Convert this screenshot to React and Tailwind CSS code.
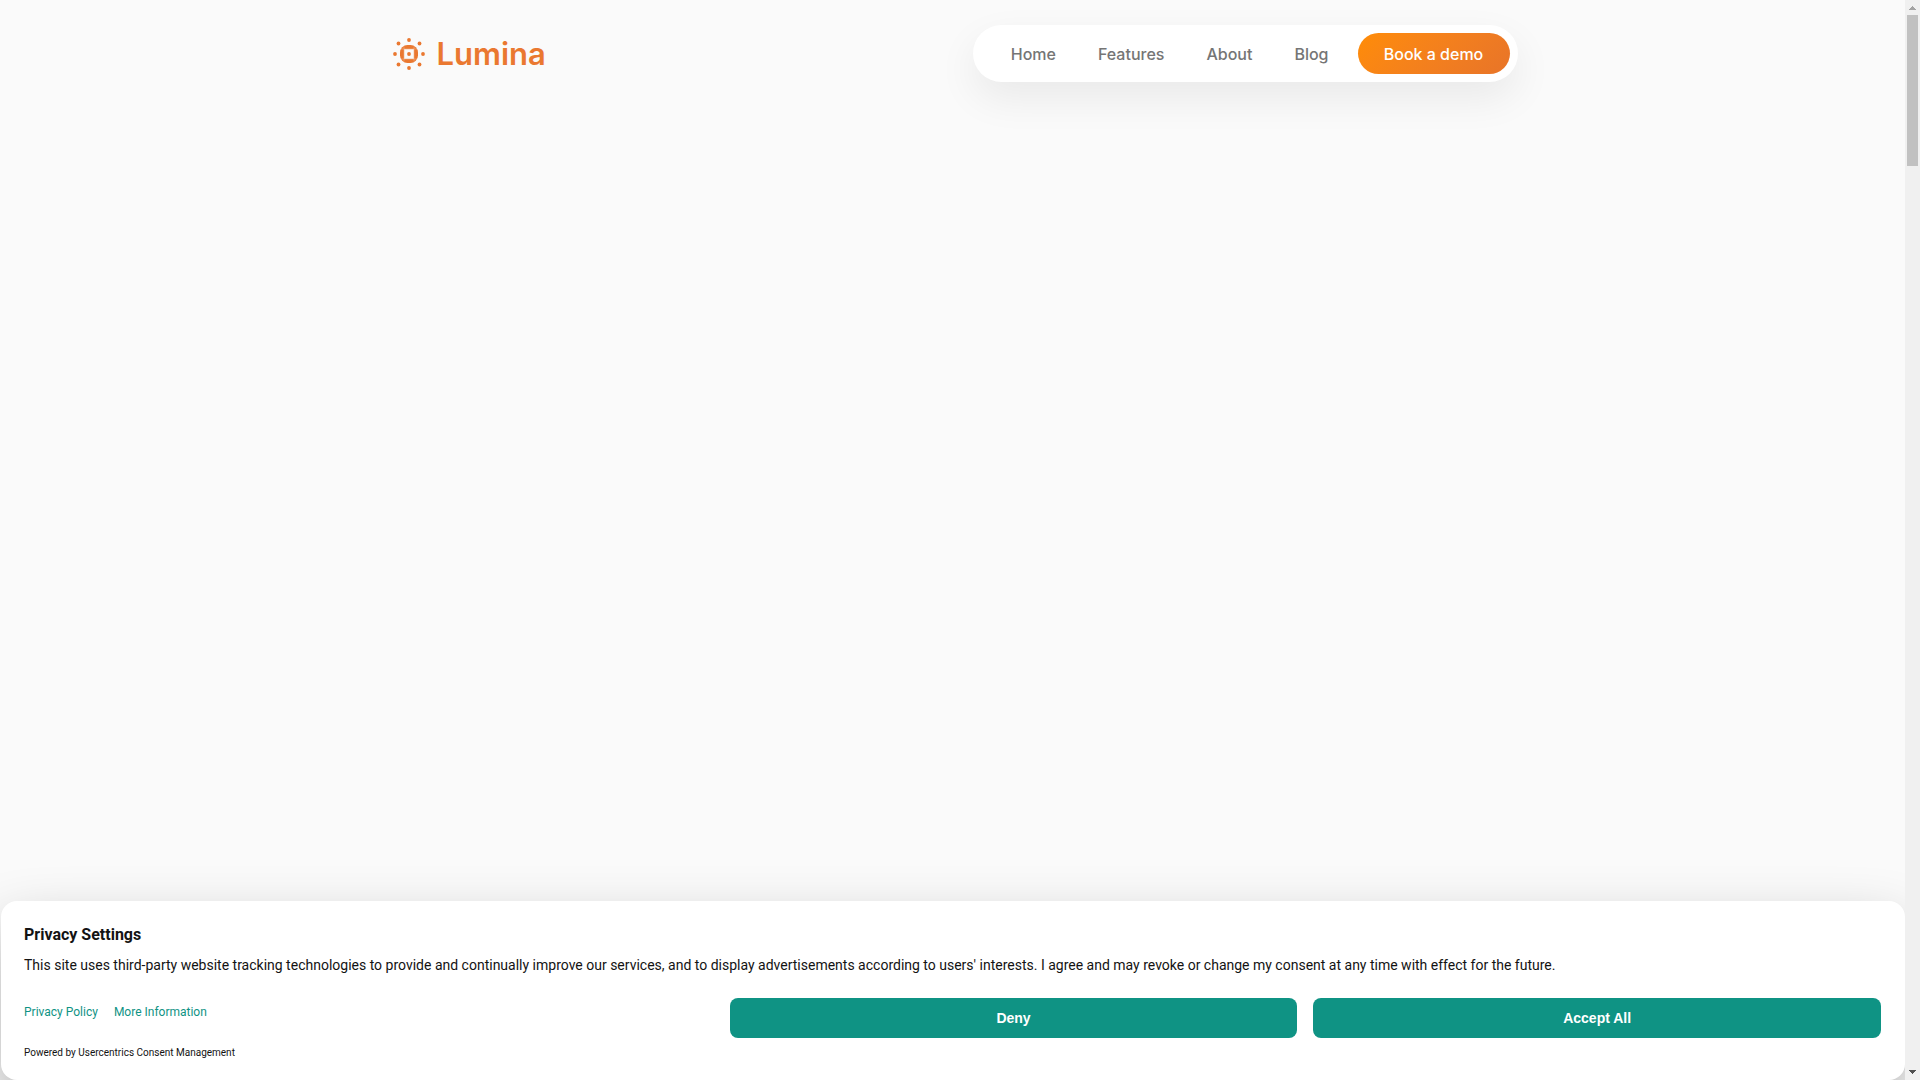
const navItems = ["Home", "Features", "About", "Blog"];

const dots = [
  [16, 2], [26.5, 5.5], [30, 16], [26.5, 26.5],
  [16, 30], [5.5, 26.5], [2, 16], [5.5, 5.5],
];

function SunLogo() {
  return (
    <svg viewBox="0 0 32 32" className="size-8" fill="#ea7830" aria-hidden="true">
      {dots.map(([cx, cy]) => (
        <circle key={`${cx}-${cy}`} cx={cx} cy={cy} r="1.9" />
      ))}
      <rect x="7" y="7" width="18" height="18" rx="7.5" />
      <rect x="11.2" y="11.2" width="9.6" height="9.6" fill="#fafafa" />
      <path d="M8 11h16M8 21h16M11 8.5v15M21 8.5v15" stroke="#fafafa" strokeWidth="0.4" opacity="0.6" />
      <circle cx="16" cy="16" r="1.9" />
    </svg>
  );
}

function Header() {
  return (
    <header className="mx-auto flex w-full max-w-[1130px] items-center justify-between pt-[25px] pl-[5px] font-['Inter',sans-serif]">
      <a href="#" className="flex items-center gap-3 text-[31px] leading-8 font-semibold text-[#ea7830]">
        <SunLogo />
        Lumina
      </a>
      <nav className="flex items-center rounded-full bg-white p-2 pl-[17px] text-base font-medium text-[#757575] shadow-[0_16px_40px_rgba(0,0,0,0.07)]">
        {navItems.map((item) => (
          <a key={item} href="#" className="px-[21px] leading-6">
            {item}
          </a>
        ))}
        <a
          href="#"
          className="ml-2 flex h-[41px] w-[152px] items-center justify-center rounded-full bg-linear-135 from-[#ff8c05] to-[#e87428] text-white"
        >
          Book a demo
        </a>
      </nav>
    </header>
  );
}

function PrivacyBanner() {
  return (
    <section
      aria-labelledby="privacy-title"
      className="ml-px rounded-2xl bg-white pt-[22px] pr-6 pb-5 pl-[23px] font-['Roboto',sans-serif] text-[#131313] shadow-[0_28px_60px_rgba(0,0,0,0.3)]"
    >
      <h2 id="privacy-title" className="text-base leading-6 font-bold">
        Privacy Settings
      </h2>
      <p className="mt-2 text-sm leading-5">
        This site uses third-party website tracking technologies to provide and continually improve our services, and to
        display advertisements according to users' interests. I agree and may revoke or change my consent at any time
        with effect for the future.
      </p>
      <div className="mt-[23px] flex items-start justify-between">
        <div className="flex gap-4 pt-1 text-xs leading-5 text-[#0f9384]">
          <a href="#">Privacy Policy</a>
          <a href="#">More Information</a>
        </div>
        <div className="grid w-[62%] grid-cols-2 gap-4 font-['Liberation_Sans',sans-serif] text-sm font-bold text-white">
          <button type="button" className="h-10 rounded-lg bg-[#0f9384]">
            Deny
          </button>
          <button type="button" className="h-10 rounded-lg bg-[#0f9384]">
            Accept All
          </button>
        </div>
      </div>
      <p className="mt-2 text-[10px] leading-[14px]">Powered by Usercentrics Consent Management</p>
    </section>
  );
}

function Scrollbar() {
  return (
    <div className="relative z-10 flex w-[15px] shrink-0 flex-col items-center bg-[#f0f0f0]" aria-hidden="true">
      <svg viewBox="0 0 15 15" className="size-[15px]" fill="#a3a3a3">
        <path d="M4 10h7V9h-1V8H9V7H8V6H7v1H6v1H5v1H4z" />
      </svg>
      <div className="h-[151px] w-[11px] bg-[#c1c1c1]" />
      <svg viewBox="0 0 15 15" className="mt-auto size-[15px]" fill="#505050">
        <path d="M4 5h7v1h-1v1H9v1H8v1H7V8H6V7H5V6H4z" />
      </svg>
    </div>
  );
}

export default function App() {
  return (
    <div className="flex h-screen overflow-hidden bg-[#fafafa]">
      <div className="flex min-w-0 flex-1 flex-col justify-between">
        <Header />
        <PrivacyBanner />
      </div>
      <Scrollbar />
    </div>
  );
}
